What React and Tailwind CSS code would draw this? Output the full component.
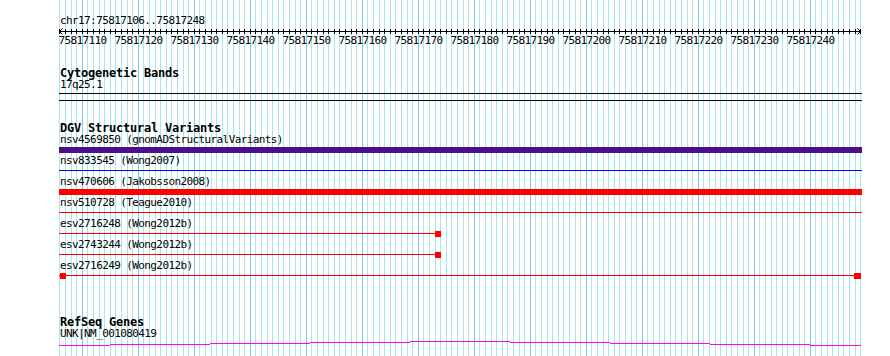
const gx = (k) => Math.floor(59.9 + 5.6 * k)
const X0 = 59
const W = 803

const mono = "font-['DejaVu_Sans_Mono',monospace] text-[11px] leading-[12px] tracking-[-0.6px] text-black whitespace-pre"
const bold = "font-['DejaVu_Sans_Mono',monospace] font-bold text-[12px] leading-[12px] tracking-[-0.22px] text-black whitespace-pre"

const ticks = Array.from({ length: 144 }, (_, k) => k)
const majors = ticks.filter((k) => (k - 4) % 10 === 0)

const items = [
  { label: "nsv4569850 (gnomADStructuralVariants)", kind: "bar", color: "#4b0f87" },
  { label: "nsv833545 (Wong2007)", kind: "line", color: "#0000ff" },
  { label: "nsv470606 (Jakobsson2008)", kind: "bar", color: "#ff0000" },
  { label: "nsv510728 (Teague2010)", kind: "line", color: "#ff0000" },
  { label: "esv2716248 (Wong2012b)", kind: "tail", color: "#ff0000" },
  { label: "esv2743244 (Wong2012b)", kind: "tail", color: "#ff0000" },
  { label: "esv2716249 (Wong2012b)", kind: "ends", color: "#ff0000" }
]

const geneSteps = [
  [59, 110, 345],
  [110, 210, 344],
  [210, 310, 343],
  [310, 410, 342],
  [410, 510, 341],
  [510, 610, 342],
  [610, 710, 343],
  [710, 810, 344],
  [810, 861, 345]
]

const Grid = () => (
  <svg className="absolute inset-0" width="890" height="356" shapeRendering="crispEdges">
    {ticks.map((k) => (
      <rect
        key={k}
        x={gx(k)}
        y="0"
        width="1"
        height="356"
        fill={(k - 4) % 10 === 0 ? "#84c6ea" : "#a6e8ec"}
      />
    ))}
  </svg>
)

const Ruler = () => (
  <svg width={W} height="20" className="block ml-[59px] overflow-visible" shapeRendering="crispEdges">
    <rect x="0" y="4" width={W - 1} height="1" fill="#000" />
    {ticks.map((k) => (
      <rect key={k} x={gx(k) - X0} y="2" width="1" height="5" fill="#000" />
    ))}
    <path d="M3.5 1.5 L0.5 4.5 L3.5 7.5" stroke="#000" fill="none" shapeRendering="auto" />
    <path d="M798.5 1.5 L801.5 4.5 L798.5 7.5" stroke="#000" fill="none" shapeRendering="auto" />
    {majors.map((k) => (
      <text
        key={k}
        x={gx(k) - X0 + 0.5}
        y="17"
        textAnchor="middle"
        fontFamily="DejaVu Sans Mono, monospace"
        fontSize="11"
        letterSpacing="-0.6"
        fill="#000"
      >
        {75817106 + k}
      </text>
    ))}
  </svg>
)

const Feature = ({ kind, color }) => (
  <svg width={W} height="9" className="block ml-[59px]" shapeRendering="crispEdges">
    {kind === "bar" && <rect x="0" y="1" width={W} height="6" fill={color} />}
    {kind === "line" && <rect x="0" y="3" width={W} height="1" fill={color} />}
    {kind === "tail" && (
      <>
        <rect x="0" y="3" width="377" height="1" fill={color} />
        <rect x="376" y="1" width="6" height="6" fill={color} />
      </>
    )}
    {kind === "ends" && (
      <>
        <rect x="0" y="3" width={W - 1} height="1" fill={color} />
        <rect x="1" y="1" width="6" height="6" fill={color} />
        <rect x="795" y="1" width="7" height="6" fill={color} />
      </>
    )}
  </svg>
)

const App = () => {
  return (
    <div className="relative w-[890px] h-[356px] bg-white overflow-hidden">
      <Grid />
      <div className="relative flex flex-col pt-[15px]">
        <div className={`${mono} pl-[60px]`}>chr17:75817106..75817248</div>
        <Ruler />

        <div className={`${bold} pl-[60px] mt-[20px]`}>Cytogenetic Bands</div>
        <div className={`${mono} pl-[60px]`}>17q25.1</div>
        <svg width={W} height="11" className="block ml-[59px]" shapeRendering="crispEdges">
          <rect x="0" y="2" width={W} height="1" fill="#000" />
          <rect x="0" y="9" width={W} height="1" fill="#000" />
        </svg>

        <div className={`${bold} pl-[60px] mt-[20px]`}>DGV Structural Variants</div>
        {items.map((it) => (
          <div key={it.label} className="flex flex-col">
            <div className={`${mono} pl-[60px]`}>{it.label}</div>
            <Feature kind={it.kind} color={it.color} />
          </div>
        ))}

        <div className={`${bold} pl-[60px] mt-[35px]`}>RefSeq Genes</div>
        <div className={`${mono} pl-[60px]`}>UNK|NM_001080419</div>
        <svg width={W} height="8" className="block ml-[59px]" shapeRendering="crispEdges">
          {geneSteps.map(([a, b, y]) => (
            <rect key={a} x={a - X0} y={y - 340} width={b - a} height="1" fill="#ff00ff" />
          ))}
        </svg>
      </div>
    </div>
  )
}

export default App
